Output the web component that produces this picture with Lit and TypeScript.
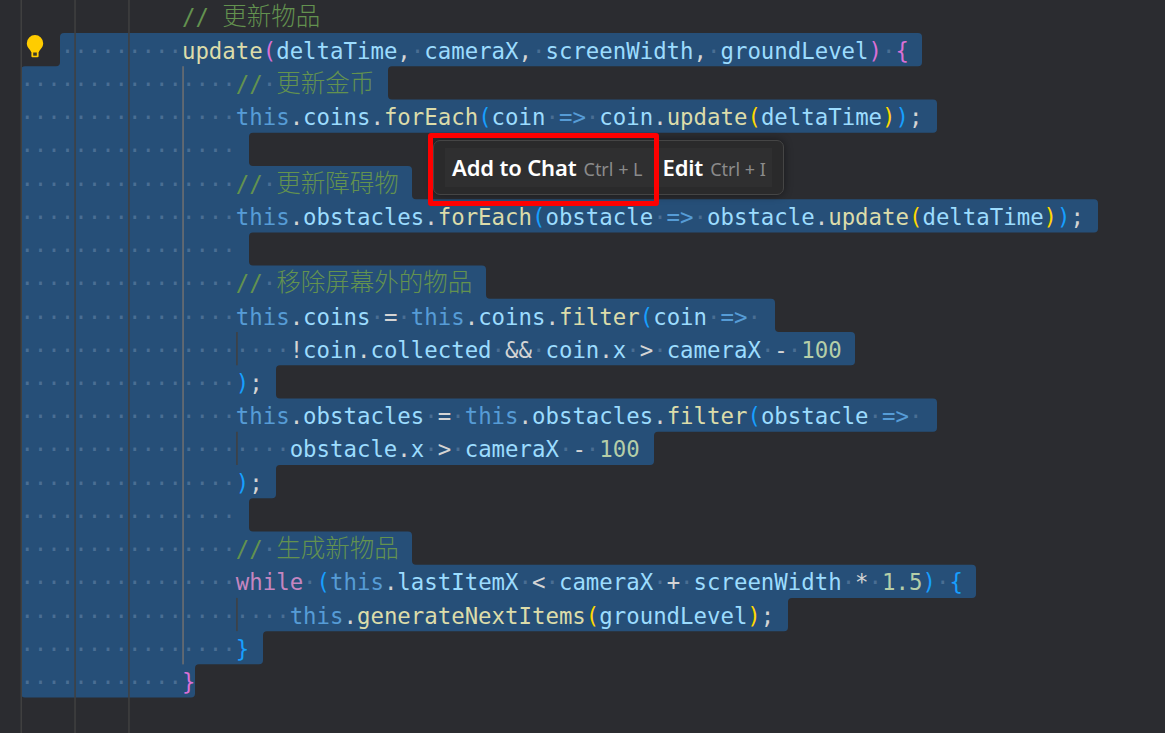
import { LitElement, html, svg, css } from "lit";
import { customElement } from "lit/decorators.js";

type Tok = [string, string];
const LH = 33.23;
const TOP = 33;
const X0 = 21;

const sp = (n: number): Tok => ["", " ".repeat(n)];
const cm = (zh: string): Tok[] => [["c", "//"], ["", " "], ["z", zh]];
const t = (s: string): Tok => ["t", s];
const v = (s: string): Tok => ["v", s];
const f = (s: string): Tok => ["f", s];
const o = (s: string): Tok => ["o", s];
const ar: Tok = ["t", "=>"];
const gold = (s: string): Tok => ["bg", s];
const pink = (s: string): Tok => ["bp", s];
const blue = (s: string): Tok => ["bb", s];

interface Line { toks: Tok[]; end?: number; }

const LINES: Line[] = [
  { toks: [["raw", "            "], ["c", "// "], ["z", "更新物品"]] },
  { end: 922, toks: [["raw", "   "], sp(9), f("update"), pink("("), v("deltaTime"), o(","), sp(1), v("cameraX"), o(","), sp(1), v("screenWidth"), o(","), sp(1), v("groundLevel"), pink(")"), sp(1), pink("{")] },
  { end: 388, toks: [sp(16), ...cm("更新金币")] },
  { end: 937, toks: [sp(16), t("this"), o("."), v("coins"), o("."), f("forEach"), blue("("), v("coin"), sp(1), ar, sp(1), v("coin"), o("."), f("update"), gold("("), v("deltaTime"), gold(")"), blue(")"), o(";")] },
  { end: 249, toks: [sp(16)] },
  { end: 412, toks: [sp(16), ...cm("更新障碍物")] },
  { end: 1098, toks: [sp(16), t("this"), o("."), v("obstacles"), o("."), f("forEach"), blue("("), v("obstacle"), sp(1), ar, sp(1), v("obstacle"), o("."), f("update"), gold("("), v("deltaTime"), gold(")"), blue(")"), o(";")] },
  { end: 249, toks: [sp(16)] },
  { end: 486, toks: [sp(16), ...cm("移除屏幕外的物品")] },
  { end: 775, toks: [sp(16), t("this"), o("."), v("coins"), sp(1), o("="), sp(1), t("this"), o("."), v("coins"), o("."), f("filter"), blue("("), v("coin"), sp(1), ar, sp(1)] },
  { end: 855, toks: [sp(20), o("!"), v("coin"), o("."), v("collected"), sp(1), o("&&"), sp(1), v("coin"), o("."), v("x"), sp(1), o(">"), sp(1), v("cameraX"), sp(1), o("-"), sp(1), ["n", "100"]] },
  { end: 276, toks: [sp(16), blue(")"), o(";")] },
  { end: 937, toks: [sp(16), t("this"), o("."), v("obstacles"), sp(1), o("="), sp(1), t("this"), o("."), v("obstacles"), o("."), f("filter"), blue("("), v("obstacle"), sp(1), ar, sp(1)] },
  { end: 654, toks: [sp(20), v("obstacle"), o("."), v("x"), sp(1), o(">"), sp(1), v("cameraX"), sp(1), o("-"), sp(1), ["n", "100"]] },
  { end: 276, toks: [sp(16), blue(")"), o(";")] },
  { end: 249, toks: [sp(16)] },
  { end: 412, toks: [sp(16), ...cm("生成新物品")] },
  { end: 976, toks: [sp(16), ["k", "while"], sp(1), blue("("), t("this"), o("."), v("lastItemX"), sp(1), o("<"), sp(1), v("cameraX"), sp(1), o("+"), sp(1), v("screenWidth"), sp(1), o("*"), sp(1), ["n", "1.5"], blue(")"), sp(1), blue("{")] },
  { end: 788, toks: [sp(20), t("this"), o("."), f("generateNextItems"), gold("("), v("groundLevel"), gold(")"), o(";")] },
  { end: 263, toks: [sp(16), blue("}")] },
  { end: 195, toks: [sp(12), pink("}")] },
];

function selectionPath(): string {
  const pts: [number, number][] = [];
  const y = (i: number) => TOP + (i - 1) * LH;
  pts.push([60, y(1)]);
  for (let i = 1; i < LINES.length; i++) {
    const r = LINES[i].end!;
    pts.push([r, y(i)], [r, y(i + 1)]);
  }
  const last = LINES.length;
  pts.push([X0, y(last)], [X0, y(2)], [60, y(2)]);
  const R = 4;
  const n = pts.length;
  let d = "";
  for (let i = 0; i < n; i++) {
    const p = pts[i];
    const a = pts[(i - 1 + n) % n];
    const b = pts[(i + 1) % n];
    const la = Math.hypot(a[0] - p[0], a[1] - p[1]);
    const lb = Math.hypot(b[0] - p[0], b[1] - p[1]);
    const s: [number, number] = [p[0] + ((a[0] - p[0]) / la) * R, p[1] + ((a[1] - p[1]) / la) * R];
    const e: [number, number] = [p[0] + ((b[0] - p[0]) / lb) * R, p[1] + ((b[1] - p[1]) / lb) * R];
    d += `${i ? "L" : "M"}${s[0].toFixed(2)} ${s[1].toFixed(2)}Q${p[0]} ${p[1]} ${e[0].toFixed(2)} ${e[1].toFixed(2)}`;
  }
  return d + "Z";
}

const SHORT_GUIDES = [10, 13, 18];

@customElement("app-root")
export class AppRoot extends LitElement {
  static styles = css`
    :host {
      display: block;
      width: 1165px;
      height: 733px;
      position: relative;
      overflow: hidden;
      background: #2b2c30;
    }
    .bg { position: absolute; left: 0; top: 0; }
    .sel { fill: #264f78; }
    .guide { fill: #404040; }
    .guide.active { fill: #707070; }
    .bulb { position: absolute; left: 24px; top: 34px; }
    .code {
      position: relative;
      padding: 1.8px 0 0 20.4px;
      font-family: "DejaVu Sans Mono", "Noto Sans CJK SC", monospace;
      font-size: 22.37px;
      color: #d4d4d4;
    }
    .row {
      height: ${LH}px;
      line-height: ${LH}px;
      white-space: pre;
    }
    .row.first { height: 33px; line-height: 31px; }
    .dot { color: #4a6e93; }
    .c, .z { color: #63924f; }
    .z { font-family: "Noto Sans CJK SC", sans-serif; font-size: 24.5px; line-height: 1; font-weight: 300; }
    .t { color: #569cd6; }
    .v { color: #9cdcfe; }
    .f { color: #dcdcaa; }
    .o { color: #d4d4d4; }
    .k { color: #c586c0; }
    .n { color: #b5cea8; }
    .bp { color: #da70d6; }
    .bb { color: #179fff; }
    .bgold { color: #ffd700; }
    .popup {
      position: absolute;
      left: 433px;
      top: 140px;
      width: 351px;
      height: 55px;
      box-sizing: border-box;
      padding: 7px 11px;
      background: #2a2a2b;
      border: 1px solid #454545;
      border-radius: 7px;
      box-shadow: 0 0 9px rgba(0, 0, 0, 0.45);
      font-family: "Noto Sans", "Open Sans", sans-serif;
    }
    .inner {
      display: flex;
      align-items: center;
      gap: 20px;
      height: 39px;
      box-sizing: border-box;
      padding: 0 0 2px 7px;
      background: #2f2f30;
      white-space: nowrap;
    }
    .item { display: flex; align-items: baseline; gap: 7px; }
    .label { color: #ffffff; font-size: 22px; font-weight: 600; letter-spacing: -0.15px; }
    .key { color: #8b8b8b; font-size: 18px; }
    .mark {
      position: absolute;
      left: 428px;
      top: 133px;
      width: 231px;
      height: 73px;
      box-sizing: border-box;
      border: 5px solid #fe0000;
      border-radius: 3px;
    }
  `;

  private renderTok(tok: Tok, selected: boolean) {
    const [cls, text] = tok;
    if (cls === "raw") return html`${text}`;
    if (cls === "") {
      return selected ? html`<span class="dot">${"·".repeat(text.length)}</span>` : html`${text}`;
    }
    const name = cls === "bg" ? "bgold" : cls;
    return html`<span class=${name}>${text}</span>`;
  }

  render() {
    const g = (x: number, y0: number, y1: number, active = false) =>
      svg`<rect class="guide ${active ? "active" : ""}" x=${x} y=${y0} width="1.5" height=${y1 - y0}></rect>`;
    const yy = (i: number) => TOP + (i - 1) * LH;
    return html`
      <svg class="bg" width="1165" height="733" viewBox="0 0 1165 733">
        <path class="sel" d=${selectionPath()}></path>
        ${[20.5, 74.3, 128.2].map((x) => g(x, 0, 733))}
        ${g(182.3, yy(2), yy(20), true)}
        ${SHORT_GUIDES.map((i) => g(236.2, yy(i), yy(i + 1)))}
      </svg>
      <svg class="bulb" width="22" height="25" viewBox="0 0 22 25">
        <path d="M11 1a8.200 8.200 0 0 0-8.200 8.200c0 2.700 1.200 4.400 2.600 6 .8.900 1.600 1.900 1.600 2.800h8c0-.9.800-1.900 1.600-2.800 1.400-1.600 2.600-3.300 2.600-6A8.200 8.200 0 0 0 11 1z" fill="#ffcc00"></path>
        <path d="M7.400 16v6.300c0 .5.400.9.900.9h5.400c.5 0 .9-.4.9-.9V16z" fill="#ffcc00"></path>
        <rect x="9.200" y="18.500" width="3.600" height="3.200" fill="#3a3a2a"></rect>
      </svg>
      <div class="code">
        ${LINES.map(
          (l, i) => html`<div class="row ${i === 0 ? "first" : ""}">${l.toks.map((tk) => this.renderTok(tk, i > 0))}</div>`
        )}
      </div>
      <div class="popup">
        <div class="inner">
          <div class="item"><span class="label">Add to Chat</span><span class="key">Ctrl + L</span></div>
          <div class="item"><span class="label">Edit</span><span class="key">Ctrl + I</span></div>
        </div>
      </div>
      <div class="mark"></div>
    `;
  }
}
